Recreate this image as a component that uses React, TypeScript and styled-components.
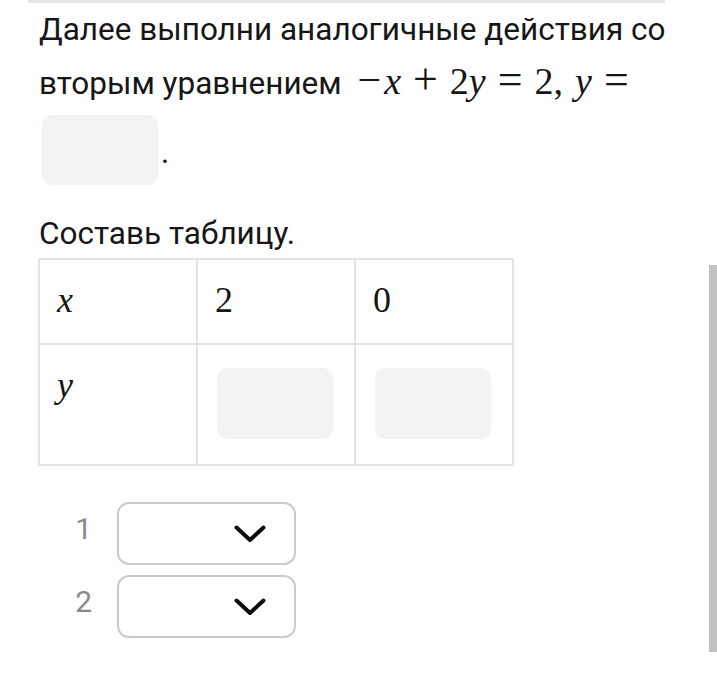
import React from "react";
import styled, { createGlobalStyle } from "styled-components";

const Global = createGlobalStyle`
  html, body { margin: 0; padding: 0; background: #fff; }
  body { font-family: Roboto, "Noto Sans", sans-serif; color: #161616; }
`;

const Page = styled.div`
  width: 717px;
  height: 687px;
  overflow: hidden;
  position: relative;
`;

const TopRule = styled.div`
  margin-left: 28px;
  width: 637px;
  height: 3px;
  background: #e6e6e6;
`;

const Content = styled.div`
  padding-left: 39px;
  display: flex;
  flex-direction: column;
  align-items: flex-start;
`;

const Paragraph = styled.p`
  margin: 0;
  width: 660px;
  font-size: 31.5px;
  line-height: 54px;
`;

const Math = styled.span`
  font-family: "Liberation Serif", "DejaVu Serif", serif;
  font-size: 38px;
  line-height: 40px;
  white-space: nowrap;
  margin-left: 8px;
`;

const MI = styled.i<{ $pre?: number }>`
  font-style: italic;
  margin-left: ${(p) => p.$pre ?? 0}px;
`;

const Op = styled.span<{ $gap?: number }>`
  display: inline-block;
  font-size: 44px;
  line-height: 40px;
  margin: 0 ${(p) => p.$gap ?? 12}px;
`;

const Minus = styled.span`
  font-size: 42px;
`;

const AnswerLine = styled.div`
  display: flex;
  align-items: center;
  margin-top: 4px;
  margin-left: 3px;
`;

const Blank = styled.div<{ $w?: number; $h?: number }>`
  width: ${(p) => p.$w ?? 116}px;
  height: ${(p) => p.$h ?? 70}px;
  border-radius: 10px;
  background: #f2f3f5;
`;

const Period = styled.span`
  font-size: 31px;
  margin-left: 3px;
  margin-top: 4px;
`;

const Heading = styled.div`
  margin-top: 29px;
  font-size: 31.5px;
  line-height: 40px;
`;

const Table = styled.table`
  margin-top: 4px;
  margin-left: -1px;
  border-collapse: collapse;
  table-layout: fixed;
  border: 2px solid #e3e3e3;
`;

const Cell = styled.td<{ $h: number }>`
  width: 156px;
  height: ${(p) => p.$h}px;
  border: 2px solid #e3e3e3;
  padding: 0;
  vertical-align: top;
`;

const CellText = styled.div`
  padding: 20px 0 0 17px;
  font-family: "Liberation Serif", "DejaVu Serif", serif;
  font-size: 36px;
  line-height: 40px;
`;

const CellSlot = styled.div`
  padding: 23px 0 0 19px;
`;

const Selects = styled.div`
  margin-top: 36px;
  display: flex;
  flex-direction: column;
  gap: 10px;
`;

const SelectRow = styled.div`
  display: flex;
  align-items: center;
`;

const Num = styled.span`
  width: 53px;
  text-align: right;
  font-size: 30px;
  color: #8a8a8a;
  margin-right: 25px;
  margin-top: -10px;
`;

const SelectBox = styled.div`
  box-sizing: border-box;
  width: 179px;
  height: 63px;
  border: 2px solid #cacaca;
  border-radius: 12px;
  display: flex;
  align-items: center;
  justify-content: flex-end;
  padding-right: 28px;
`;

const ScrollThumb = styled.div`
  position: absolute;
  right: 0;
  top: 265px;
  width: 8px;
  height: 387px;
  background: #c2c2c2;
`;

function Chevron() {
  return (
    <svg width="32" height="18" viewBox="0 0 32 18" fill="none">
      <polyline
        points="2.5,2.5 16,15 29.5,2.5"
        stroke="#0a0a0a"
        strokeWidth="4"
        strokeLinecap="round"
        strokeLinejoin="round"
      />
    </svg>
  );
}

export default function App() {
  return (
    <Page>
      <Global />
      <TopRule />
      <Content>
        <Paragraph>
          Далее выполни аналогичные действия со вторым уравнением{" "}
          <Math>
            <Minus>−</Minus>
            <MI $pre={3}>x</MI>
            <Op>+</Op>2<MI>y</MI>
            <Op>=</Op>2,<Op $gap={6} />
            <MI>y</MI>
            <Op>=</Op>
          </Math>
        </Paragraph>
        <AnswerLine>
          <Blank />
          <Period>.</Period>
        </AnswerLine>
        <Heading>Составь таблицу.</Heading>
        <Table>
          <tbody>
            <tr>
              <Cell $h={83}>
                <CellText>
                  <MI>x</MI>
                </CellText>
              </Cell>
              <Cell $h={83}>
                <CellText>2</CellText>
              </Cell>
              <Cell $h={83}>
                <CellText>0</CellText>
              </Cell>
            </tr>
            <tr>
              <Cell $h={119}>
                <CellText>
                  <MI>y</MI>
                </CellText>
              </Cell>
              <Cell $h={119}>
                <CellSlot>
                  <Blank $w={116} $h={71} />
                </CellSlot>
              </Cell>
              <Cell $h={119}>
                <CellSlot>
                  <Blank $w={116} $h={71} />
                </CellSlot>
              </Cell>
            </tr>
          </tbody>
        </Table>
        <Selects>
          {["1", "2"].map((n) => (
            <SelectRow key={n}>
              <Num>{n}</Num>
              <SelectBox>
                <Chevron />
              </SelectBox>
            </SelectRow>
          ))}
        </Selects>
      </Content>
      <ScrollThumb />
    </Page>
  );
}
